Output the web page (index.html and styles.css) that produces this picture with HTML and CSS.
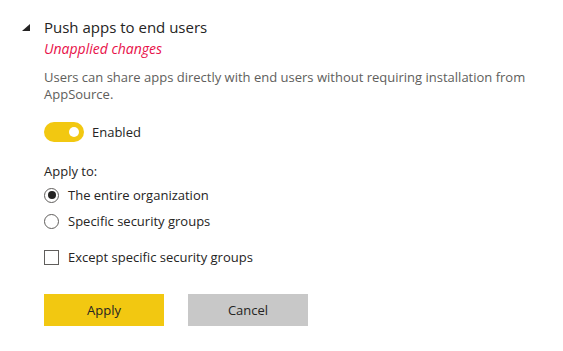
FILE: index.html
```html
<!DOCTYPE html>
<html lang="en">
<head>
  <meta charset="UTF-8" />
  <title>Push apps to end users</title>
  <link rel="stylesheet" href="styles.css">
</head>
<body>
  <section class="setting">
    <div class="setting-head">
      <svg class="caret" width="8" height="7" viewBox="0 0 8 7"><polygon points="0,7 8,7 8,0" fill="#252423"/></svg>
      <h2 class="setting-title">Push apps to end users</h2>
    </div>

    <div class="setting-body">
      <div class="unapplied">Unapplied changes</div>
      <p class="desc">Users can share apps directly with end users without requiring installation from AppSource.</p>

      <label class="toggle-row">
        <span class="toggle on"><span class="knob"></span></span>
        <span>Enabled</span>
      </label>

      <div class="apply-label">Apply to:</div>
      <div class="options">
        <label class="option">
          <span class="radio checked"></span>
          <span>The entire organization</span>
        </label>
        <label class="option">
          <span class="radio"></span>
          <span>Specific security groups</span>
        </label>
      </div>

      <label class="option except">
        <span class="checkbox"></span>
        <span>Except specific security groups</span>
      </label>

      <div class="actions">
        <button class="btn primary">Apply</button>
        <button class="btn secondary">Cancel</button>
      </div>
    </div>
  </section>
</body>
</html>
```

FILE: styles.css
```css
:root {
  --text: #252423;
  --muted: #605e5c;
  --yellow: #f2c811;
  --grey: #c8c8c8;
  --red: #e8114a;
}

* {
  margin: 0;
  padding: 0;
  box-sizing: border-box;
}

body {
  font-family: "Open Sans", sans-serif;
  background: #fff;
  color: var(--text);
}

.setting {
  padding: 16px 0 0 22px;
  width: 545px;
}

.setting-head {
  display: flex;
  align-items: center;
  gap: 14px;
}

.caret {
  margin-top: 1px;
}

.setting-title {
  font-size: 15px;
  font-weight: 400;
  line-height: 22px;
}

.setting-body {
  padding-left: 22px;
  font-size: 13px;
}

.unapplied {
  color: var(--red);
  font-size: 14px;
  font-style: italic;
  line-height: 18px;
  margin-top: 2px;
}

.desc {
  color: var(--muted);
  line-height: 17px;
  margin-top: 11px;
}

.toggle-row {
  display: flex;
  align-items: center;
  gap: 8px;
  margin-top: 19px;
  color: var(--text);
}

.toggle {
  width: 40px;
  height: 20px;
  border-radius: 10px;
  background: var(--yellow);
  display: flex;
  align-items: center;
  justify-content: flex-end;
  padding-right: 5px;
}

.knob {
  width: 10px;
  height: 10px;
  border-radius: 50%;
  background: #fff;
}

.apply-label {
  margin-top: 20px;
  line-height: 18px;
}

.options {
  margin-top: 2px;
}

.option {
  display: flex;
  align-items: center;
  gap: 9px;
  height: 26px;
}

.radio {
  width: 15px;
  height: 15px;
  border: 1px solid var(--muted);
  border-radius: 50%;
  display: flex;
  align-items: center;
  justify-content: center;
}

.radio.checked::after {
  content: "";
  width: 8px;
  height: 8px;
  border-radius: 50%;
  background: var(--text);
}

.except {
  margin-top: 10px;
}

.checkbox {
  width: 15px;
  height: 15px;
  border: 1px solid var(--muted);
}

.actions {
  display: flex;
  gap: 24px;
  margin-top: 24px;
}

.btn {
  width: 120px;
  height: 32px;
  border: none;
  font-family: inherit;
  font-size: 13px;
  color: var(--text);
  cursor: pointer;
}

.btn.primary {
  background: var(--yellow);
}

.btn.secondary {
  background: var(--grey);
}
```
